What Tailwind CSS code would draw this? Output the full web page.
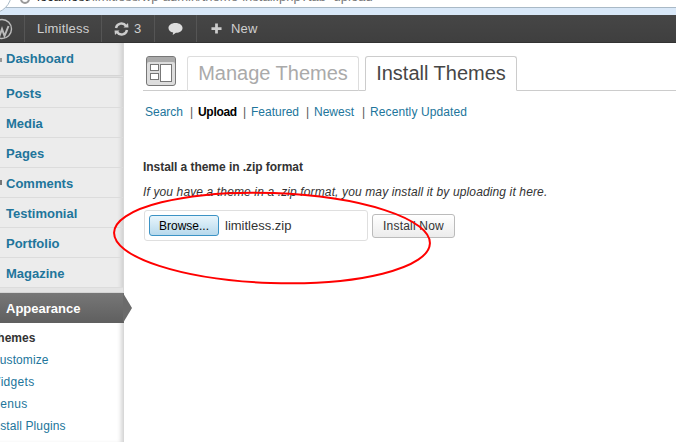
<!DOCTYPE html>
<html lang="en">
<head>
    <meta charset="UTF-8">
    <title>Install Themes</title>
    <script src="https://cdn.jsdelivr.net/npm/@tailwindcss/browser@4"></script>
</head>
<body class="relative w-[676px] h-[442px] overflow-hidden bg-white font-['Liberation_Sans',Arial,sans-serif]">
    <!-- Browser chrome -->
    <div class="h-[15px] overflow-hidden relative">
        <div class="h-[7px] bg-white flex items-end pl-[37px] border-b border-[#a9b9c6] box-content overflow-hidden">
            <span class="text-[13px] leading-[15px] text-[#777] whitespace-nowrap mb-[3px]"><b class="text-[#222] font-normal">localhost</b>/limitless/wp-admin/theme-install.php?tab=upload</span>
        </div>
        <div class="h-[7px] bg-[#d9e8f8]"></div>
        <div class="absolute left-[-30px] top-[-28px] w-[42px] h-[42px] rounded-full bg-white border border-[#a9b9c6]"></div>
        <div class="absolute left-[20px] top-[-6px] w-[10px] h-[10px] rounded-full border-2 border-[#999]"></div>
    </div>

    <!-- Admin bar -->
    <div class="h-[28px] bg-gradient-to-b from-[#464646] to-[#3f3f3f] border-b border-[#333] flex items-stretch text-[13px] tracking-[0.2px] text-[#cfcfcf]">
        <div class="w-[25px] flex items-center border-r border-[#555] overflow-hidden">
            <svg width="22" height="22" viewBox="0 0 22 22" class="ml-[-9px] shrink-0">
                <circle cx="11" cy="11" r="9.5" fill="none" stroke="#bbb" stroke-width="1.4"/>
                <path d="M4.5 8 L8.5 18 L11 11 L13.5 18 L17.5 8" fill="none" stroke="#bbb" stroke-width="2"/>
            </svg>
        </div>
        <div class="w-[77px] flex items-center pl-[12px] border-r border-[#555]">Limitless</div>
        <div class="w-[53px] flex items-center gap-[5px] pl-[12px] border-r border-[#555]">
            <svg width="15" height="14" viewBox="0 0 15 14" fill="none" stroke="#ccc" stroke-width="2.4">
                <path d="M2 6 A5.5 5.5 0 0 1 12 4"/>
                <path d="M13 8 A5.5 5.5 0 0 1 3 10"/>
                <path d="M9.5 5.5 L14.5 5.5 L14 1 Z" fill="#ccc" stroke="none"/>
                <path d="M5.5 8.5 L0.5 8.5 L1 13 Z" fill="#ccc" stroke="none"/>
            </svg>
            <span>3</span>
        </div>
        <div class="w-[42px] flex items-center justify-center border-r border-[#555]">
            <svg width="15" height="14" viewBox="0 0 16 14"><path d="M8 0.5 C12.5 0.5 15.5 2.8 15.5 5.8 C15.5 8.8 12.5 11 8.5 11 L5 13.5 L5.5 10.6 C2.5 10 0.5 8.2 0.5 5.8 C0.5 2.8 3.5 0.5 8 0.5 Z" fill="#ddd"/></svg>
        </div>
        <div class="flex items-center gap-[9px] pl-[14px]">
            <svg width="11" height="11" viewBox="0 0 12 12"><path d="M4.5 0.5 H7.5 V4.5 H11.5 V7.5 H7.5 V11.5 H4.5 V7.5 H0.5 V4.5 H4.5 Z" fill="#ccc"/></svg>
            <span>New</span>
        </div>
    </div>

    <div class="flex h-[399px]">
        <!-- Sidebar -->
        <aside class="w-[124px] shrink-0 relative bg-white border-r border-[#d8d8d8] shadow-[inset_-4px_0_4px_-2px_#d5d5d5] text-[13px]">
            <nav class="bg-[#ececec] font-bold text-[#21759b] shadow-[inset_-4px_0_4px_-2px_#cfcfcf]">
                <div class="h-[32px] flex items-center pl-[6px] relative">
                    <span class="absolute left-0 top-[15px] w-[2px] h-[4px] bg-[#999]"></span>
                    Dashboard
                </div>
                <div class="h-[3px] bg-[#e0e0e0] border-y border-[#d5d5d5]"></div>
                <div class="h-[30px] flex items-center pl-[6px] pt-[2px] border-b border-[#dcdcdc]">Posts</div>
                <div class="h-[30px] flex items-center pl-[6px] pt-[2px] border-b border-[#dcdcdc]">Media</div>
                <div class="h-[30px] flex items-center pl-[6px] pt-[2px] border-b border-[#dcdcdc]">Pages</div>
                <div class="h-[30px] flex items-center pl-[6px] pt-[2px] border-b border-[#dcdcdc] relative">
                    <span class="absolute left-0 top-[12px] w-[2px] h-[5px] bg-[#777]"></span>
                    Comments
                </div>
                <div class="h-[30px] flex items-center pl-[6px] pt-[2px] border-b border-[#dcdcdc]">Testimonial</div>
                <div class="h-[30px] flex items-center pl-[6px] pt-[2px] border-b border-[#dcdcdc]">Portfolio</div>
                <div class="h-[30px] flex items-center pl-[6px] pt-[2px] border-b border-[#dcdcdc]">Magazine</div>
                <div class="h-[5px] bg-[#e4e4e4] border-b border-[#d5d5d5]"></div>
            </nav>
            <div class="relative h-[30px] w-[124px] bg-gradient-to-b from-[#777] to-[#5f5f5f] flex items-center pl-[6px] pt-[1px] font-bold text-white">
                Appearance
                <svg class="absolute left-[123px] top-0" width="9" height="30" viewBox="0 0 9 30"><path d="M0 0 L9 15 L0 30 Z" fill="#6b6b6b"/></svg>
            </div>
            <ul class="text-[12px] text-[#21759b] pt-[4px] whitespace-nowrap">
                <li class="h-[22px] flex items-center ml-[-10px] font-bold text-[#333]">Themes</li>
                <li class="h-[22px] flex items-center ml-[-9px] tracking-[0.1px]">Customize</li>
                <li class="h-[22px] flex items-center ml-[-11px] tracking-[0.3px]">Widgets</li>
                <li class="h-[22px] flex items-center ml-[-10px] tracking-[0.3px]">Menus</li>
                <li class="h-[22px] flex items-center ml-[-10px] tracking-[0.1px]">Install Plugins</li>
            </ul>
        </aside>

        <!-- Main content -->
        <main class="flex-1 pl-[19px] pt-[13px]">
            <div class="flex items-end border-b border-[#ccc] h-[35px]">
                <div class="w-[30px] h-[30px] mb-[4px] ml-[3px] mr-[11px] rounded-[3px] bg-[#ddd] border border-[#777] p-[3px] pt-[7px] flex gap-[1px] shadow-[inset_0_5px_0_#aaa]">
                    <div class="flex flex-col gap-[2px] w-[9px]">
                        <div class="h-[7px] bg-white border border-[#777]"></div>
                        <div class="h-[7px] bg-white border border-[#777]"></div>
                    </div>
                    <div class="flex-1 bg-white border border-[#777]"></div>
                </div>
                <div class="w-[172px] h-[35px] mb-[-1px] mr-[6px] pb-[2px] border border-[#ddd] border-b-[#ccc] rounded-t-[3px] flex items-center justify-center text-[20px] text-[#aaa]">Manage Themes</div>
                <div class="w-[152px] h-[35px] mb-[-1px] pb-[2px] border border-[#ccc] border-b-white rounded-t-[3px] flex items-center justify-center bg-white text-[20px] text-[#464646]">Install Themes</div>
            </div>
            <div class="mt-[13px] ml-[2px] flex text-[12px] leading-[16px] text-[#21759b] whitespace-nowrap">
                <span class="w-[45px]">Search</span>
                <span class="w-[8px] text-[#555]">|</span>
                <span class="w-[45px] font-bold text-black tracking-[-0.3px]">Upload</span>
                <span class="w-[8px] text-[#555]">|</span>
                <span class="w-[55px]">Featured</span>
                <span class="w-[8px] text-[#555]">|</span>
                <span class="w-[48px]">Newest</span>
                <span class="w-[8px] text-[#555]">|</span>
                <span class="tracking-[0.1px]">Recently Updated</span>
            </div>
            <h4 class="mt-[39px] text-[12px] leading-[16px] font-bold text-[#333] tracking-[-0.05px]">Install a theme in .zip format</h4>
            <p class="mt-[9px] text-[12px] leading-[16px] italic text-[#333] tracking-[0.13px] whitespace-nowrap">If you have a theme in a .zip format, you may install it by uploading it here.</p>
            <form class="mt-[10px] flex items-center gap-[4px] ml-[1px]">
                <div class="w-[224px] h-[31px] border border-[#dfdfdf] rounded-[3px] flex items-center pl-[4px] gap-[6px] text-[13px] text-[#333]">
                    <button type="button" class="w-[70px] h-[21px] rounded-[3px] border border-[#3c93c5] bg-gradient-to-b from-[#e8f5fc] to-[#b7d9ec] text-[12px] text-black">Browse...</button>
                    <span>limitless.zip</span>
                </div>
                <button type="button" class="w-[83px] h-[24px] rounded-[3px] border border-[#bbb] bg-gradient-to-b from-white to-[#ececec] text-[12px] text-[#333] tracking-[0.2px]">Install Now</button>
            </form>
        </main>
    </div>

    <!-- Red annotation ellipse -->
    <svg class="absolute left-0 top-0 pointer-events-none" width="676" height="442" viewBox="0 0 676 442">
        <ellipse cx="272" cy="238" rx="158" ry="45" transform="rotate(2 272 238)" fill="none" stroke="#f00" stroke-width="2"/>
    </svg>
</body>
</html>
